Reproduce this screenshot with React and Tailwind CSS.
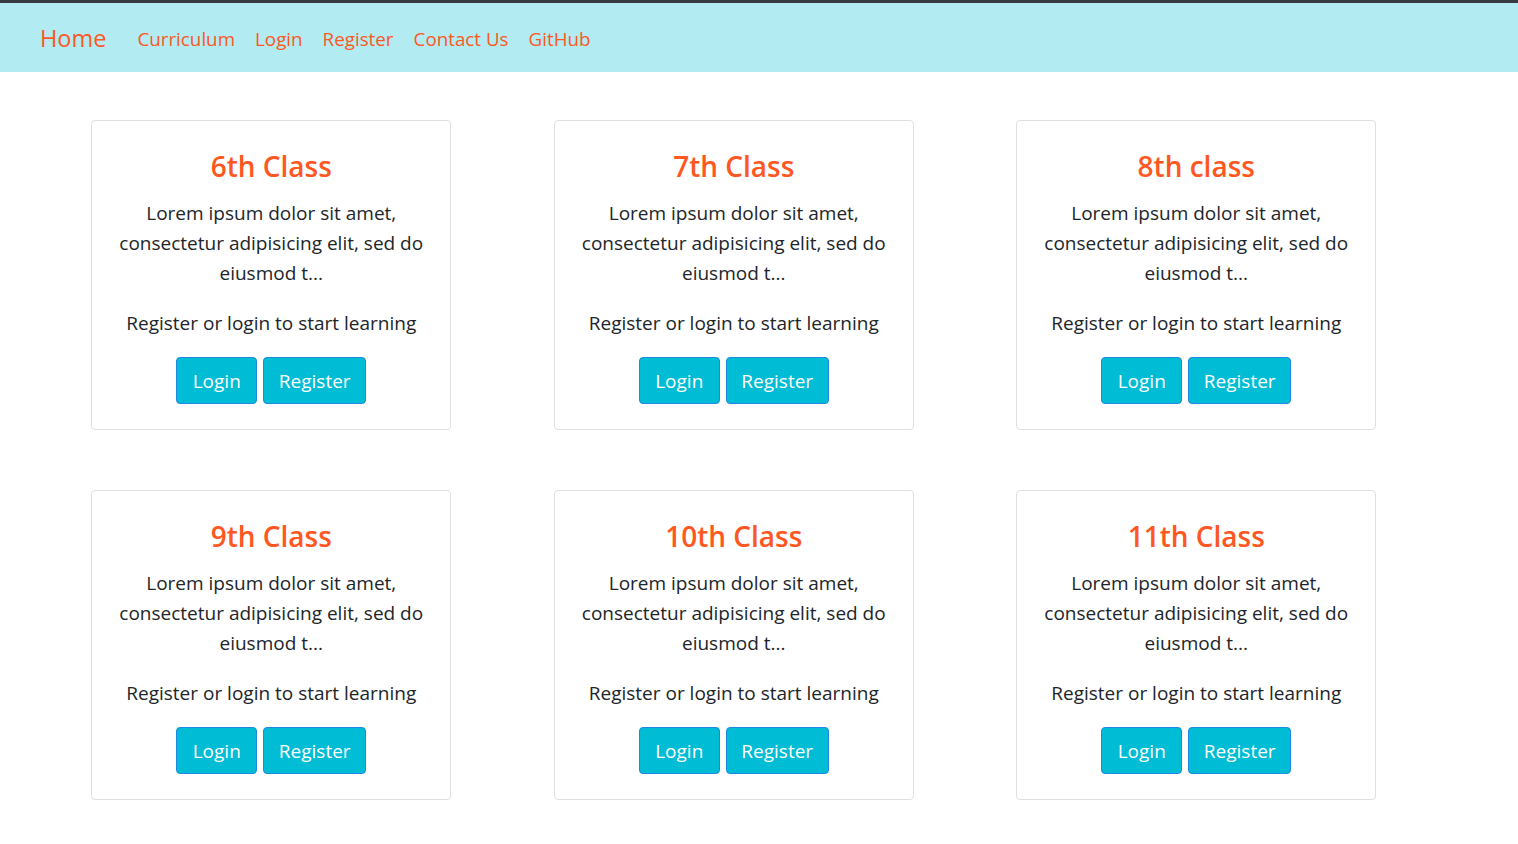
import React from 'react';

const classes = ['6th Class', '7th Class', '8th class', '9th Class', '10th Class', '11th Class'];

const ClassCard = ({ title }) => {
  return (
    <div className="w-[360px] h-[310px] border border-[#dfdfdf] rounded-[4px] bg-white flex flex-col items-center pt-[26px] text-center">
      <h3 className="text-[28px] leading-[38px] font-semibold text-[#ff5722]">{title}</h3>
      <p className="mt-[13px] text-[19px] leading-[30px] text-[#212529] px-[22px]">
        Lorem ipsum dolor sit amet, consectetur adipisicing elit, sed do eiusmod t...
      </p>
      <p className="mt-[20px] text-[19px] leading-[30px] text-[#212529]">Register or login to start learning</p>
      <div className="mt-[19px] flex gap-[6px]">
        <button className="w-[81px] h-[47px] pt-[2px] bg-[#00bcd4] border border-[#1e88e5] rounded-[4px] text-white text-[19px]">
          Login
        </button>
        <button className="w-[103px] h-[47px] pt-[2px] bg-[#00bcd4] border border-[#1e88e5] rounded-[4px] text-white text-[19px]">
          Register
        </button>
      </div>
    </div>
  );
};

const App = () => {
  return (
    <div className="min-h-screen bg-white font-['Open_Sans',sans-serif]">
      <nav className="border-t-[3px] border-[#343a40] bg-[#b2ebf2] h-[72px] flex items-center pl-[40px] pt-[3px]">
        <a className="text-[23.5px] text-[#ff5722] mr-[31px]">Home</a>
        <div className="flex gap-[20px] text-[18.8px] text-[#ff5722]">
          <a>Curriculum</a>
          <a>Login</a>
          <a>Register</a>
          <a>Contact Us</a>
          <a>GitHub</a>
        </div>
      </nav>
      <div className="ml-[40px] w-[1387.5px] pt-[48px] grid grid-cols-3 gap-y-[60px]">
        {classes.map((c) => (
          <div key={c} className="flex justify-center">
            <ClassCard title={c} />
          </div>
        ))}
      </div>
    </div>
  );
};

export default App;
